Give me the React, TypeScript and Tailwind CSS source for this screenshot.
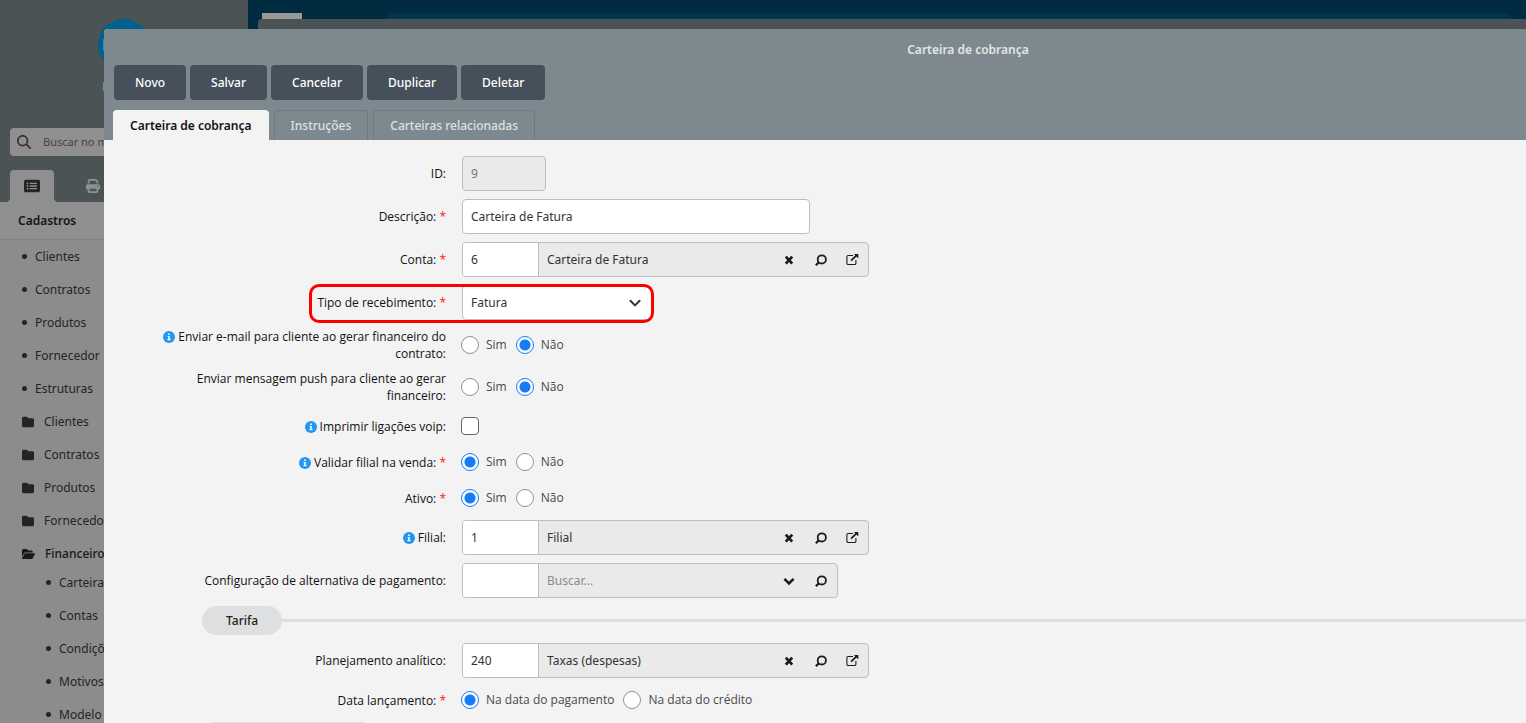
import React from "react";
import { FaFolder, FaFolderOpen, FaMagnifyingGlass, FaPrint, FaRectangleList } from "react-icons/fa6";

const menuItems = ["Clientes", "Contratos", "Produtos", "Fornecedor", "Estruturas"];
const menuFolders = ["Clientes", "Contratos", "Produtos", "Fornecedor"];
const financeItems = ["Carteiras", "Contas", "Condições", "Motivos", "Modelo"];
const actions = ["Novo", "Salvar", "Cancelar", "Duplicar", "Deletar"];

const CloseIcon = () => (
    <svg className="w-4 h-4" viewBox="0 0 16 16" fill="none" stroke="currentColor" strokeWidth={2.8}>
        <path d="M4.8 4.6l6.4 7M11.2 4.6l-6.4 7" />
    </svg>
);

const SearchIcon = () => (
    <svg className="w-4 h-4" viewBox="0 0 16 16" fill="none" stroke="currentColor" strokeWidth={1.8}>
        <circle cx="8.8" cy="7.4" r="4.1" />
        <path d="M5.8 10.4L2.8 13.2" strokeWidth={2.2} />
    </svg>
);

const ExternalIcon = () => (
    <svg className="w-4 h-4" viewBox="0 0 16 16" fill="none" stroke="currentColor" strokeWidth={1.1}>
        <path d="M8 3.5H3.1a1.2 1.2 0 0 0-1.2 1.2v6.6a1.2 1.2 0 0 0 1.2 1.2h6.6a1.2 1.2 0 0 0 1.2-1.2V8" />
        <path d="M6.1 8.6l5.4-5.2" strokeWidth={1.8} />
        <path d="M8.9 2h4.4v4.4z" fill="currentColor" stroke="none" />
    </svg>
);

const ChevronIcon = ({ bold = false }: { bold?: boolean }) => (
    <svg className="w-4 h-4" viewBox="0 0 16 16" fill="none" stroke="currentColor" strokeWidth={bold ? 2.6 : 2}>
        <path d="M3.4 5.8L8 10.4l4.6-4.6" strokeLinecap={bold ? "butt" : "round"} strokeLinejoin={bold ? "miter" : "round"} />
    </svg>
);

const InfoIcon = () => (
    <svg className="inline-block w-3 h-3 mr-[3px] align-[-2px]" viewBox="0 0 12 12">
        <circle cx="6" cy="6" r="6" fill="#2196f3" />
        <path d="M5.1 2.6h1.7v1.5H5.1zM4.6 5h2.2v3.1h.7v1.1h-3V8.1h.7v-2h-.6z" fill="#fff" />
    </svg>
);

type LabelTextProps = { text: string; required?: boolean; info?: boolean };

const LabelText = ({ text, required, info }: LabelTextProps) => (
    <>
        {info && <InfoIcon />}
        {text}
        {required && <span className="text-[#f81818]"> *</span>}
    </>
);

type RowProps = LabelTextProps & { id: string; group?: boolean; children: React.ReactNode };

const Row = ({ id, group, children, ...label }: RowProps) => (
    <div className="flex items-center gap-4 min-h-7">
        {group ? (
            <span id={id} className="w-[300px] shrink-0 text-right leading-[17px] font-['Open_Sans','Noto_Sans',sans-serif]">
                <LabelText {...label} />
            </span>
        ) : (
            <label htmlFor={id} className="w-[300px] shrink-0 text-right leading-[17px] font-['Open_Sans','Noto_Sans',sans-serif]">
                <LabelText {...label} />
            </label>
        )}
        {children}
    </div>
);

const RadioGroup = ({ id, options, selected }: { id: string; options: string[]; selected: number }) => (
    <div role="radiogroup" aria-labelledby={id} className="-ml-px flex items-center gap-[9px] leading-[18px] font-['Open_Sans','Noto_Sans',sans-serif]">
        {options.map((option, i) => (
            <label key={option} className="flex items-center gap-[7px] text-[#4a4a4a]">
                <input
                    type="radio"
                    name={id}
                    defaultChecked={i === selected}
                    className="appearance-none w-[18px] h-[18px] rounded-full border border-[#8d9199] bg-white checked:border-[#147cf7] checked:bg-[radial-gradient(circle,#147cf7_5px,#ffffff_6px)]"
                />
                {option}
            </label>
        ))}
    </div>
);

type LookupProps = { id: string; code?: string; text?: string; suggest?: boolean };

const Lookup = ({ id, code, text, suggest }: LookupProps) => (
    <div className="flex h-[35px] rounded border border-[#b9bfc4] bg-[#eaeaea] overflow-hidden text-[#1c1c1c]">
        <input id={id} defaultValue={code} className="w-[76px] pl-2 bg-white border-r border-[#b9bfc4] text-[#333] outline-none" />
        <input
            aria-label="Descrição do registro"
            defaultValue={text}
            placeholder="Buscar..."
            className="w-[234px] pl-2 text-[#333] placeholder:text-[#8a8a8a] outline-none"
        />
        <button type="button" className="w-8 flex items-center justify-center" aria-label={suggest ? "Abrir lista" : "Limpar"}>
            {suggest ? <ChevronIcon bold /> : <CloseIcon />}
        </button>
        <button type="button" className="w-8 flex items-center justify-center" aria-label="Buscar">
            <SearchIcon />
        </button>
        {!suggest && (
            <button type="button" className="w-[31px] flex items-center justify-center" aria-label="Abrir cadastro">
                <ExternalIcon />
            </button>
        )}
    </div>
);

const Divider = ({ title }: { title: string }) => (
    <div className="flex items-center pl-14">
        <h2 className="h-[29px] px-6 flex items-center rounded-full bg-[#dddfe1] font-medium text-[#222]">{title}</h2>
        <div className="flex-1 h-[3px] bg-[#dddfe1]" />
    </div>
);

const Sidebar = () => (
    <aside className="w-[248px] shrink-0 h-full flex flex-col bg-[#4b5355] text-[#242424] *:shrink-0">
        <div className="h-32 pt-[19px] flex flex-col items-center">
            <div className="w-[52px] h-[52px] rounded-full bg-[#00608f] flex items-center justify-center">
                <span className="w-11 font-['Open_Sans',sans-serif] text-base font-bold text-[#a8b0b4]">I</span>
            </div>
            <p className="mt-2 w-11 font-['Open_Sans',sans-serif] text-[#7c9fb5]">I</p>
        </div>
        <div className="mx-2.5 h-7 flex items-center rounded bg-[#8f8f8f]">
            <FaMagnifyingGlass className="ml-[7px] w-3.5 h-3.5 text-[#333]" />
            <input aria-label="Buscar no menu" placeholder="Buscar no menu" className="ml-3 w-40 text-[11px] placeholder:text-[#444] outline-none" />
        </div>
        <div className="mt-3.5 px-2.5 flex">
            <button aria-label="Cadastros" className="relative w-11 h-8 rounded-t flex items-center justify-center bg-[#8f8f8f]">
                <span className="absolute -left-1 bottom-0 w-1 h-1 bg-[radial-gradient(circle_at_0_0,#4b5355_4px,#8f8f8f_4px)]" />
                <FaRectangleList className="w-4 h-4" />
                <span className="absolute -right-1 bottom-0 w-1 h-1 bg-[radial-gradient(circle_at_100%_0,#4b5355_4px,#8f8f8f_4px)]" />
            </button>
            <button aria-label="Relatórios" className="w-[77px] h-8 flex items-center justify-center text-[#8f9294]">
                <FaPrint className="w-3.5 h-3.5" />
            </button>
        </div>
        <h2 className="h-[38px] pl-[18px] flex items-center bg-[#8f8f8f] border-b border-[#828282] font-semibold text-[#141414]">Cadastros</h2>
        <ul className="grow bg-[#8c8c8c]">
            {menuItems.map((item) => (
                <li key={item} className="h-[33px] pl-[22px] flex items-center gap-2">
                    <span className="w-[5px] h-[5px] rounded-full bg-[#242424]" />
                    <a href="#">{item}</a>
                </li>
            ))}
            {menuFolders.map((item) => (
                <li key={item} className="h-[33px] pl-[22px] flex items-center gap-2.5">
                    <FaFolder className="w-3 h-3" />
                    <a href="#">{item}</a>
                </li>
            ))}
            <li>
                <div className="h-[33px] pl-[22px] flex items-center gap-2.5 font-medium text-[#181818]">
                    <FaFolderOpen className="w-[13px] h-3" />
                    <a href="#">Financeiro</a>
                </div>
                <ul className="-mt-1">
                    {financeItems.map((item) => (
                        <li key={item} className="h-[33px] pl-[46px] flex items-center gap-2">
                            <span className="w-[5px] h-[5px] rounded-full bg-[#242424]" />
                            <a href="#">{item}</a>
                        </li>
                    ))}
                </ul>
            </li>
        </ul>
    </aside>
);

const App = () => {
    return (
        <div className="h-screen overflow-hidden flex bg-[#002b40] font-['Noto_Sans','Open_Sans',sans-serif] text-xs text-[#111]">
            <Sidebar />

            {/* Page behind the dialog */}
            <main className="flex-1 flex flex-col">
                <div className="h-[19px] pt-[13px] pl-3.5 pr-2.5 flex gap-20 overflow-hidden">
                    <div className="w-10 h-1.5 bg-[#999]" />
                    <div className="flex-1 h-7 rounded-full bg-[#00364b]" />
                </div>
                <div className="flex-1 ml-2.5 rounded-tl bg-[#4b5355]" />
            </main>

            <div className="fixed inset-0 pl-[104px] pt-[29px] flex">
                <div role="dialog" aria-labelledby="dialog-title" className="flex-1 flex flex-col rounded-tl bg-[#f3f3f3] overflow-hidden">
                    <header className="bg-[#7d898e]">
                        <h1 id="dialog-title" className="h-9 pt-1.5 pl-[306px] flex items-center justify-center font-semibold text-[#e4e7e8]">
                            Carteira de cobrança
                        </h1>
                        <div className="px-2.5 flex gap-1">
                            {actions.map((action) => (
                                <button key={action} className="h-[35px] px-[21px] rounded bg-[#46505a] font-medium text-white">
                                    {action}
                                </button>
                            ))}
                        </div>
                        <div role="tablist" className="mt-2.5 px-[9px] flex gap-[5px] font-medium text-[#dde1e2]">
                            <button role="tab" aria-selected="true" className="h-[30px] px-4 rounded-t border border-b-0 border-[#f3f3f3] bg-[#f3f3f3] font-semibold text-[#111]">
                                Carteira de cobrança
                            </button>
                            <button role="tab" aria-selected="false" className="h-[30px] px-4 rounded-t border border-b-0 border-[#6d7a80]">
                                Instruções
                            </button>
                            <button role="tab" aria-selected="false" className="h-[30px] px-4 rounded-t border border-b-0 border-[#6d7a80]">
                                Carteiras relacionadas
                            </button>
                        </div>
                    </header>

                    <form className="flex-1 min-h-0 pt-4 pl-[42px] flex flex-col gap-2 overflow-hidden *:shrink-0">
                        <Row id="registro" text="ID:">
                            <input id="registro" disabled defaultValue="9" className="w-[84px] h-[35px] pl-2 rounded border border-[#b9bfc4] bg-[#eaeaea] text-[#777]" />
                        </Row>
                        <Row id="descricao" text="Descrição:" required>
                            <input id="descricao" defaultValue="Carteira de Fatura" className="w-[348px] h-[35px] pl-2 rounded border border-[#b9bfc4] bg-white text-[#333]" />
                        </Row>
                        <Row id="conta" text="Conta:" required>
                            <Lookup id="conta" code="6" text="Carteira de Fatura" />
                        </Row>
                        <div className="relative">
                            <Row id="tipo" text="Tipo de recebimento:" required>
                                <div className="relative text-[#333]">
                                    <select id="tipo" className="block appearance-none w-[190px] h-[35px] pl-2 rounded border border-[#b9bfc4] bg-white">
                                        <option>Fatura</option>
                                    </select>
                                    <span className="absolute right-[9px] inset-y-0 flex items-center pointer-events-none">
                                        <ChevronIcon />
                                    </span>
                                </div>
                            </Row>
                            <div className="absolute left-[163px] w-[345px] -top-px -bottom-[3px] rounded-[10px] border-3 border-[#ff0000] pointer-events-none" />
                        </div>
                        <Row id="email" group text="Enviar e-mail para cliente ao gerar financeiro do contrato:" info>
                            <RadioGroup id="email" options={["Sim", "Não"]} selected={1} />
                        </Row>
                        <Row id="push" group text="Enviar mensagem push para cliente ao gerar financeiro:">
                            <RadioGroup id="push" options={["Sim", "Não"]} selected={1} />
                        </Row>
                        <Row id="voip" text="Imprimir ligações voip:" info>
                            <input id="voip" type="checkbox" className="-ml-px appearance-none w-[18px] h-[18px] rounded border border-[#666] bg-white checked:bg-[#147cf7]" />
                        </Row>
                        <Row id="validar" group text="Validar filial na venda:" required info>
                            <RadioGroup id="validar" options={["Sim", "Não"]} selected={0} />
                        </Row>
                        <Row id="ativo" group text="Ativo:" required>
                            <RadioGroup id="ativo" options={["Sim", "Não"]} selected={0} />
                        </Row>
                        <Row id="filial" text="Filial:" info>
                            <Lookup id="filial" code="1" text="Filial" />
                        </Row>
                        <Row id="alternativa" text="Configuração de alternativa de pagamento:">
                            <Lookup id="alternativa" suggest />
                        </Row>
                        <Divider title="Tarifa" />
                        <Row id="planejamento" text="Planejamento analítico:">
                            <Lookup id="planejamento" code="240" text="Taxas (despesas)" />
                        </Row>
                        <Row id="lancamento" group text="Data lançamento:" required>
                            <RadioGroup id="lancamento" options={["Na data do pagamento", "Na data do crédito"]} selected={0} />
                        </Row>
                        {/* Next section starts right at the fold */}
                        <div className="ml-14 w-[173px] h-[29px] rounded-full bg-[#dddfe1]" />
                    </form>
                </div>
            </div>
        </div>
    );
};

export default App;
